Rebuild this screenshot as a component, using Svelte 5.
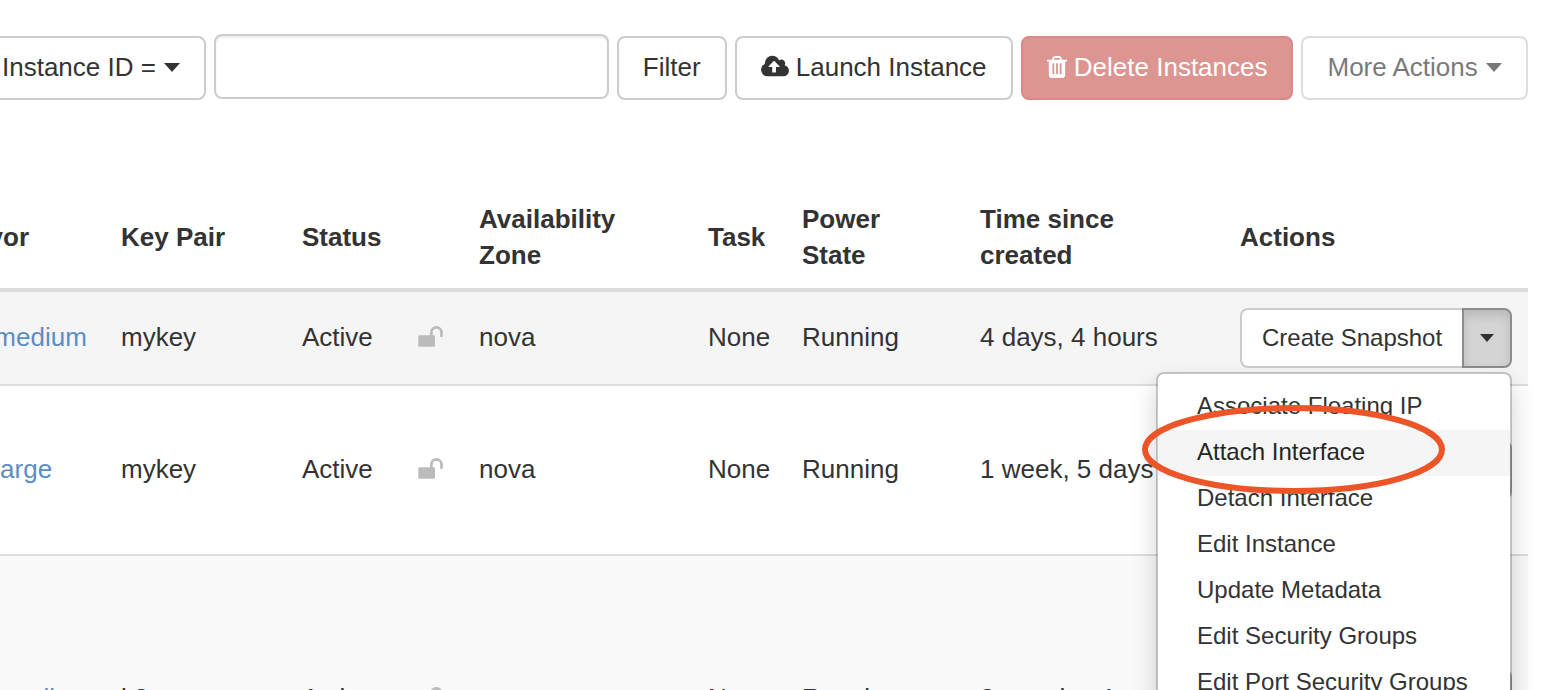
<script>
  const headers = ['Flavor', 'Key Pair', 'Status', '', 'Availability Zone', 'Task', 'Power State', 'Time since created', 'Actions'];

  const rows = [
    { flavor: 'm1.medium', key: 'mykey', age: '4 days, 4 hours', size: 'short', open: true },
    { flavor: 'm1.large', key: 'mykey', age: '1 week, 5 days', size: 'medium', open: false },
    { flavor: 'm1.small', key: 'k8s', age: '2 months, 1 week', size: 'tall', open: false }
  ];

  const menu = [
    'Associate Floating IP',
    'Attach Interface',
    'Detach Interface',
    'Edit Instance',
    'Update Metadata',
    'Edit Security Groups',
    'Edit Port Security Groups'
  ];
</script>

<main>
  <form class="toolbar" onsubmit={(e) => e.preventDefault()}>
    <button type="button" class="btn">Instance ID = <span class="caret"></span></button>
    <input type="text" class="search" aria-label="Filter value" />
    <button type="submit" class="btn">Filter</button>
    <button type="button" class="btn">
      <svg class="cloud" viewBox="0 0 1920 1792" aria-hidden="true"><path fill="currentColor" d="M1280 864q0-14-9-23l-352-352q-9-9-23-9t-23 9l-351 351q-10 12-10 24 0 14 9 23t23 9h224v352q0 13 9.5 22.5t22.5 9.5h192q13 0 22.5-9.5t9.5-22.5v-352h224q13 0 22.5-9.5t9.5-22.5zm640 288q0 159-112.5 271.5t-271.5 112.5h-1088q-185 0-316.5-131.5t-131.5-316.5q0-130 70-240t188-165q-2-30-2-43 0-212 150-362t362-150q156 0 285.5 87t188.5 231q71-62 166-62 106 0 181 75t75 181q0 76-41 138 130 31 213.5 135.5t83.5 238.5z" /></svg>
      Launch Instance
    </button>
    <button type="button" class="btn danger" disabled>
      <svg class="trash" viewBox="192 0 1408 1792" aria-hidden="true"><path fill="currentColor" d="M704 1376v-704q0-14-9-23t-23-9h-64q-14 0-23 9t-9 23v704q0 14 9 23t23 9h64q14 0 23-9t9-23zm256 0v-704q0-14-9-23t-23-9h-64q-14 0-23 9t-9 23v704q0 14 9 23t23 9h64q14 0 23-9t9-23zm256 0v-704q0-14-9-23t-23-9h-64q-14 0-23 9t-9 23v704q0 14 9 23t23 9h64q14 0 23-9t9-23zm-544-992h448l-48-117q-7-9-17-11h-317q-10 2-17 11zm928 32v64q0 14-9 23t-23 9h-96v948q0 83-47 143.5t-113 60.5h-832q-66 0-113-58.5t-47-141.5v-952h-96q-14 0-23-9t-9-23v-64q0-14 9-23t23-9h309l70-167q15-37 54-63t79-26h320q40 0 79 26t54 63l70 167h309q14 0 23 9t9 23z" /></svg>
      Delete Instances
    </button>
    <button type="button" class="btn" disabled>More Actions <span class="caret"></span></button>
  </form>

  <div class="instances">
    <table>
      <colgroup>
        <col class="c-flavor" /><col class="c-key" /><col class="c-status" /><col class="c-lock" /><col class="c-zone" />
        <col class="c-task" /><col class="c-power" /><col class="c-age" /><col class="c-actions" />
      </colgroup>
      <thead>
        <tr>
          {#each headers as h}<th scope="col">{h}</th>{/each}
        </tr>
      </thead>
      <tbody>
        {#each rows as row}
          <tr class={row.size}>
            <td><a href="#flavor">{row.flavor}</a></td>
            <td>{row.key}</td>
            <td>Active</td>
            <td>
              <svg class="lock" viewBox="0 0 25 21" role="img" aria-label="Unlocked">
                <rect x="0.3" y="9.2" width="16.7" height="11.5" rx="1.3" fill="#bbb" />
                <path d="M13.3 10V6.5a5.1 5.1 0 0 1 10.2 0V10" fill="none" stroke="#bbb" stroke-width="2.7" stroke-linecap="round" />
              </svg>
            </td>
            <td>nova</td>
            <td>None</td>
            <td>Running</td>
            <td>{row.age}</td>
            <td class="actions">
              <div class="group">
                <button type="button" class="btn small first">Create Snapshot</button>
                <button type="button" class="btn small toggle" class:active={row.open} aria-label="More instance actions" aria-expanded={row.open}><span class="caret"></span></button>
                {#if row.open}
                  <ul class="menu">
                    {#each menu as item, i}
                      <li>
                        <a href="#action" class:hover={i === 1}>{item}</a>
                        {#if i === 1}
                          <svg class="ring" viewBox="0 0 303 89" aria-hidden="true">
                            <ellipse cx="151.5" cy="44.5" rx="148.5" ry="41.5" fill="none" stroke="#ec5528" stroke-width="6" />
                          </svg>
                        {/if}
                      </li>
                    {/each}
                  </ul>
                {/if}
              </div>
            </td>
          </tr>
        {/each}
      </tbody>
    </table>
  </div>
</main>

<style>
  :global(body) {
    margin: 0;
    background: #fff;
  }
  main {
    box-sizing: border-box;
    height: 100vh;
    overflow: hidden;
    padding: 34px 14px 0 0;
    color: #333;
    font: 26px/36px 'Liberation Sans', Arial, sans-serif;
  }

  .toolbar {
    display: flex;
    align-items: center;
    gap: 8px;
    margin-left: -24px;
  }
  .btn {
    box-sizing: border-box;
    height: 64px;
    padding: 0 24px 2px;
    border: 2px solid #ccc;
    border-radius: 8px;
    background: #fff;
    color: #333;
    font: inherit;
    white-space: nowrap;
  }
  .btn:disabled {
    opacity: 0.65;
  }
  .btn.danger:disabled {
    border-color: #d98a86;
    background: #dd9591;
    color: #fff;
    opacity: 1;
  }
  .search {
    box-sizing: border-box;
    flex: 1;
    min-width: 0;
    height: 65px;
    margin-bottom: 2px;
    padding: 0 24px;
    border: 2px solid #ccc;
    border-radius: 8px;
    box-shadow: inset 0 2px 2px rgba(0, 0, 0, 0.075);
    font: inherit;
  }
  .caret {
    display: inline-block;
    margin-left: 1px;
    border: 8px solid transparent;
    border-top: 9px solid currentColor;
    border-bottom: 0;
    vertical-align: 4px;
  }
  .cloud {
    width: 28px;
    height: 26px;
    vertical-align: -4px;
  }
  .trash {
    width: 20px;
    height: 26px;
    vertical-align: -4px;
  }

  .instances {
    margin: 84px 0 0 -65px;
  }
  table {
    width: 100%;
    table-layout: fixed;
    border-collapse: separate;
    border-spacing: 0;
  }
  .c-flavor { width: 170px; }
  .c-key { width: 181px; }
  .c-status { width: 116px; }
  .c-lock { width: 61px; }
  .c-zone { width: 229px; }
  .c-task { width: 94px; }
  .c-power { width: 178px; }
  .c-age { width: 260px; }
  .c-actions { width: 304px; }

  th {
    padding: 16px 16px 15px;
    border-bottom: 4px solid #ddd;
    text-align: left;
    vertical-align: middle;
  }
  td {
    box-sizing: border-box;
    padding: 0 16px 2px;
    white-space: nowrap;
    vertical-align: middle;
  }
  td.actions {
    padding-bottom: 0;
  }
  tr + tr td {
    border-top: 2px solid #ddd;
  }
  .short td {
    height: 92px;
    background: #f5f5f5;
  }
  .medium td {
    height: 170px;
  }
  .tall td {
    height: 288px;
    background: #f9f9f9;
  }
  td > a {
    color: #5b8dc6;
    text-decoration: none;
  }
  .lock {
    display: block;
    width: 25px;
    height: 21px;
    margin-bottom: 2px;
  }

  .group {
    position: relative;
    display: flex;
  }
  .small {
    height: 60px;
    padding: 0 20px;
    font-size: 24px;
  }
  .first {
    flex: 1;
    border-right: 0;
    border-radius: 8px 0 0 8px;
  }
  .toggle {
    width: 50px;
    padding: 0;
    border-color: #aaa;
    border-radius: 0 8px 8px 0;
  }
  .toggle .caret {
    margin-left: 0;
    border-width: 8px 7px 0;
  }
  .toggle.active {
    border-color: #8c8c8c;
    background: #d4d4d4;
    box-shadow: inset 0 6px 10px rgba(0, 0, 0, 0.125);
  }

  .menu {
    position: absolute;
    z-index: 1;
    top: 64px;
    right: 0;
    min-width: 352px;
    margin: 0;
    padding: 10px 0;
    border: 2px solid rgba(0, 0, 0, 0.2);
    border-radius: 8px;
    background: #fff;
    background-clip: padding-box;
    box-shadow: 0 12px 24px rgba(0, 0, 0, 0.175);
    list-style: none;
  }
  .menu a {
    display: block;
    padding: 4px 39px 6px;
    color: #333;
    font-size: 24px;
    text-decoration: none;
  }
  .menu a.hover {
    background: #f5f5f5;
    color: #262626;
  }
  .ring {
    position: absolute;
    top: 31px;
    left: -16px;
    width: 303px;
    height: 89px;
    pointer-events: none;
  }
</style>
